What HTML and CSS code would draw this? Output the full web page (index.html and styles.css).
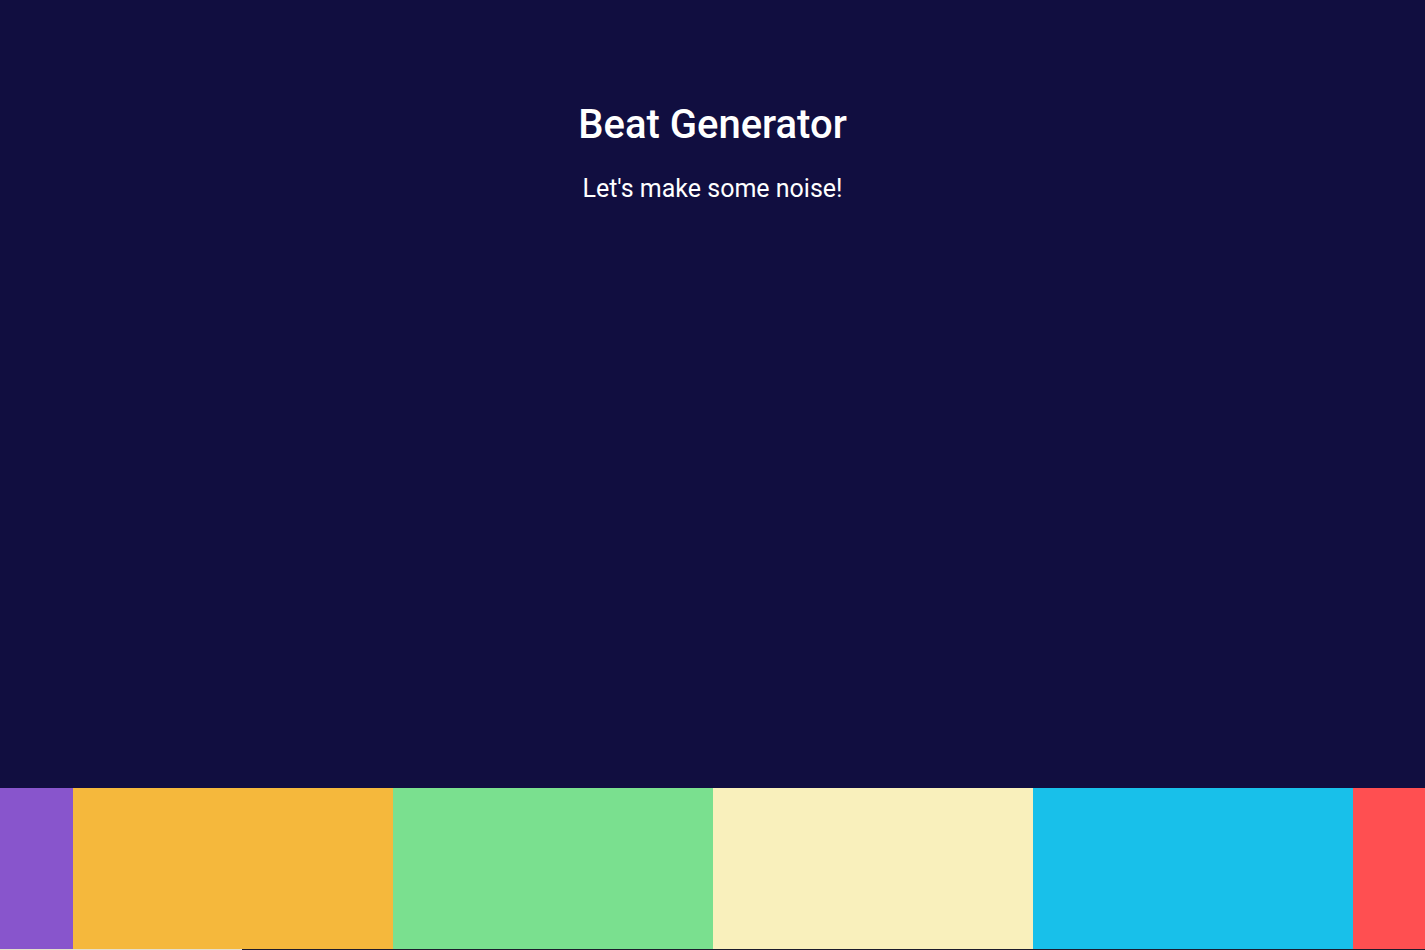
FILE: index.html
```html
<!DOCTYPE html>
<html lang="en">
<head>
<meta charset="utf-8">
<title>Beat Generator</title>
<link rel="stylesheet" href="styles.css">
</head>
<body>
<header class="header">
  <h1 class="title">Beat Generator</h1>
  <p class="subtitle">Let's make some noise!</p>
</header>
<section class="pads">
  <div class="pad pad-purple"></div>
  <div class="pad pad-orange"></div>
  <div class="pad pad-green"></div>
  <div class="pad pad-cream"></div>
  <div class="pad pad-blue"></div>
  <div class="pad pad-red"></div>
</section>
<div class="progress"><div class="progress-fill" style="width: 242px"></div></div>
</body>
</html>
```

FILE: styles.css
```css
html, body {
  margin: 0;
  padding: 0;
}
body {
  background: #110e40;
  color: #ffffff;
  font-family: Roboto, "Liberation Sans", sans-serif;
  min-height: 100vh;
  display: flex;
  flex-direction: column;
  overflow: hidden;
}
.header {
  text-align: center;
  padding-top: 101px;
}
.title {
  margin: 0;
  font-size: 40px;
  font-weight: 500;
  line-height: 48px;
}
.subtitle {
  margin: 24px 0 0;
  font-size: 25px;
  font-weight: 400;
  line-height: 32px;
}
.pads {
  margin-top: auto;
  display: flex;
  justify-content: center;
  height: 161px;
  overflow: hidden;
}
.pad {
  flex: 0 0 320px;
}
.pad-purple { background: #8855cc; }
.pad-orange { background: #f5b83c; }
.pad-green { background: #7ae08f; }
.pad-cream { background: #f9f0bc; }
.pad-blue { background: #18c0ea; }
.pad-red { background: #ff4f51; }
.progress {
  height: 1px;
  background: #1c1b2c;
}
.progress-fill {
  height: 1px;
  background: #e6dfcc;
}
```
